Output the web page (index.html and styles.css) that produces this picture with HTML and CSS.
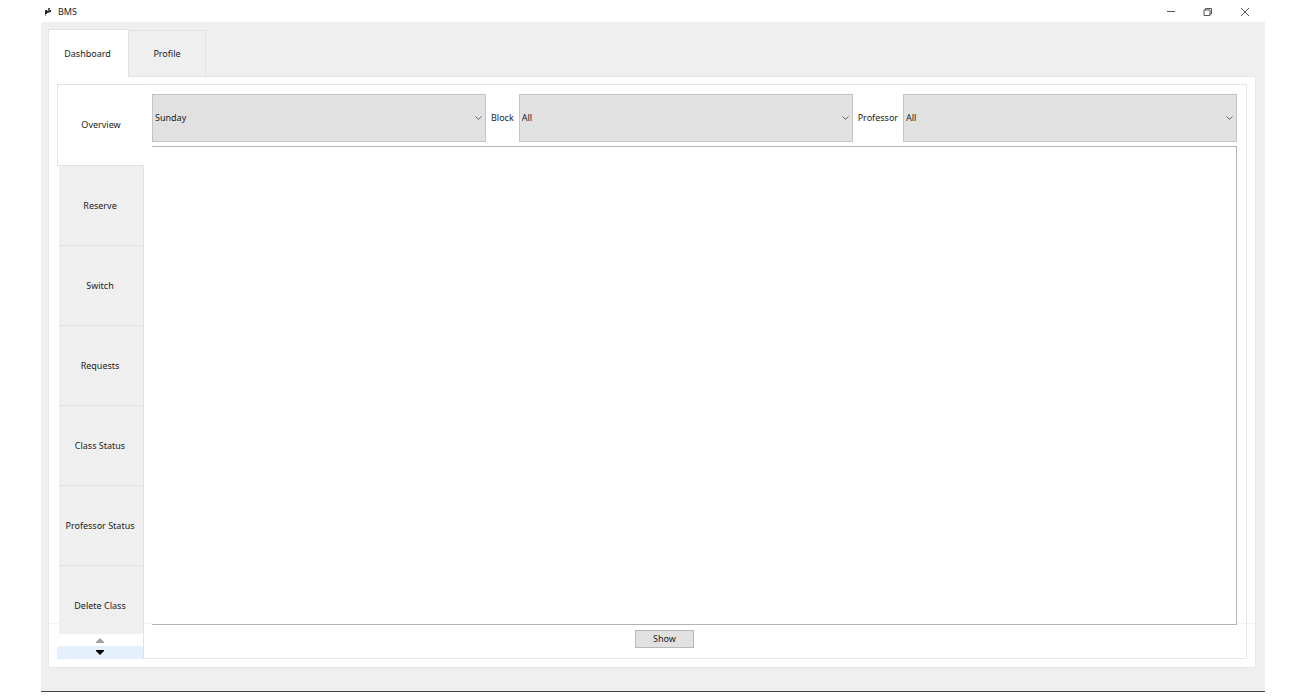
FILE: index.html
```html
<!DOCTYPE html>
<html lang="en">
<head>
    <meta charset="UTF-8">
    <meta name="viewport" content="width=device-width, initial-scale=1.0">
    <title>BMS</title>
    <link rel="stylesheet" href="styles.css">
</head>
<body>
    <div class="window">
        <header class="titlebar">
            <svg class="app-icon" viewBox="0 0 8 10" aria-hidden="true">
                <path d="M1 3 H3 V5 H1 Z M4 1 H6 V3 H4 Z" fill="#555"/>
                <path d="M1 4 L7 3 V5 L3 6 V7 H1 Z" fill="#222"/>
                <path d="M1 7 H2 V9 H1 Z" fill="#999"/>
            </svg>
            <span class="title">BMS</span>
            <div class="window-controls">
                <button class="control" aria-label="Minimize">
                    <svg viewBox="0 0 10 10"><path d="M1 4.5 H9"/></svg>
                </button>
                <button class="control" aria-label="Restore">
                    <svg viewBox="0 0 10 10"><path d="M1 3 H7 V8.5 H1 Z M2.5 3 V1.5 H8.5 V7 H7"/></svg>
                </button>
                <button class="control" aria-label="Close">
                    <svg viewBox="0 0 10 10"><path d="M1 1 L9 9 M9 1 L1 9"/></svg>
                </button>
            </div>
        </header>

        <div class="client">
            <nav class="tabs">
                <button class="tab active">Dashboard</button>
                <button class="tab">Profile</button>
            </nav>

            <main class="pane">
                <nav class="side">
                    <div class="side-tabs">
                        <button class="side-tab active">Overview</button>
                        <button class="side-tab">Reserve</button>
                        <button class="side-tab">Switch</button>
                        <button class="side-tab">Requests</button>
                        <button class="side-tab">Class Status</button>
                        <button class="side-tab">Professor Status</button>
                        <button class="side-tab">Delete Class</button>
                    </div>
                    <button class="scroll" aria-label="Scroll up" disabled>
                        <svg viewBox="0 0 8 5"><path d="M0 5 V4 L4 0 L8 4 V5 Z"/></svg>
                    </button>
                    <button class="scroll hover" aria-label="Scroll down">
                        <svg viewBox="0 0 8 5"><path d="M0 0 H8 V1 L4 5 L0 1 Z"/></svg>
                    </button>
                </nav>

                <section class="content">
                    <div class="filters">
                        <div class="combo">
                            <select id="day" aria-label="Day">
                                <option>Sunday</option>
                            </select>
                            <svg class="arrow" viewBox="0 0 7 4"><path d="M0.5 0.5 L3.5 3.3 L6.5 0.5"/></svg>
                        </div>
                        <label for="block">Block</label>
                        <div class="combo">
                            <select id="block">
                                <option>All</option>
                            </select>
                            <svg class="arrow" viewBox="0 0 7 4"><path d="M0.5 0.5 L3.5 3.3 L6.5 0.5"/></svg>
                        </div>
                        <label for="professor">Professor</label>
                        <div class="combo">
                            <select id="professor">
                                <option>All</option>
                            </select>
                            <svg class="arrow" viewBox="0 0 7 4"><path d="M0.5 0.5 L3.5 3.3 L6.5 0.5"/></svg>
                        </div>
                    </div>
                    <div class="schedule"></div>
                    <button class="show">Show</button>
                </section>
            </main>
        </div>
    </div>
</body>
</html>
```
FILE: styles.css
```css
* {
    box-sizing: border-box;
}
body {
    margin: 0;
    background: #fff;
    color: #222;
    font-family: "Noto Sans", sans-serif;
    font-size: 9px;
    line-height: 12px;
}
button,
select {
    font: inherit;
    color: inherit;
    margin: 0;
    padding: 0;
    border: none;
    border-radius: 0;
    background: none;
}
svg {
    display: block;
}
.window {
    display: flex;
    flex-direction: column;
    height: 100vh;
    padding: 0 33px 4px 41px;
}

/* title bar */
.titlebar {
    display: flex;
    align-items: center;
    gap: 6px;
    flex: 0 0 22px;
    padding: 2px 2px 0 3px;
}
.app-icon {
    width: 8px;
    height: 10px;
}
.window-controls {
    display: flex;
    margin-left: auto;
}
.control {
    display: flex;
    align-items: center;
    justify-content: center;
    width: 37px;
    height: 20px;
}
.control svg {
    width: 10px;
    height: 10px;
    fill: none;
    stroke: #555;
    stroke-width: 1;
}

/* main tabs */
.client {
    flex: 1;
    display: flex;
    flex-direction: column;
    min-height: 0;
    padding: 7px 9px 23px 7px;
    background: #efefef;
    border-bottom: 1px solid #444;
}
.tabs {
    display: flex;
    align-items: flex-end;
    flex: 0 0 47px;
}
.tab {
    width: 77px;
    height: 46px;
    border: 1px solid #e2e2e2;
    border-left: none;
    border-bottom: none;
}
.tab.active {
    width: 81px;
    height: 48px;
    padding-right: 2px;
    margin-bottom: -1px;
    border-left: 1px solid #e6e6e6;
    background: #fff;
    z-index: 1;
}
.pane {
    flex: 1;
    display: flex;
    min-height: 0;
    padding: 7px 8px 8px;
    border: 1px solid #e6e6e6;
    background: linear-gradient(#f3f3f3, #f3f3f3) 0 calc(100% - 43px) / 100% 1px no-repeat #fff;
}

/* side tabs */
.side {
    display: flex;
    flex-direction: column;
    flex: 0 0 87px;
}
.side-tabs {
    flex: 1;
    min-height: 0;
    overflow: hidden;
}
.side-tab {
    display: block;
    width: 85px;
    height: 80px;
    margin-left: 2px;
    padding-right: 2px;
    border-right: 1px solid #e2e2e2;
    border-bottom: 1px solid #e2e2e2;
    background: #efefef;
}
.side-tab.active {
    width: 87px;
    height: 82px;
    margin-left: 0;
    padding-right: 0;
    border: 1px solid #e2e2e2;
    border-right: none;
    background: #fff;
}
.scroll {
    display: flex;
    align-items: center;
    justify-content: center;
    flex: 0 0 12px;
    border-right: 1px solid #e2e2e2;
    background: #fff;
}
.scroll svg {
    width: 8px;
    height: 5px;
    fill: #000;
}
.scroll:disabled svg {
    fill: #a0a0a0;
}
.scroll.hover {
    flex-basis: 13px;
    background: #e5f0fd;
}

/* overview page */
.content {
    flex: 1;
    display: flex;
    flex-direction: column;
    min-width: 0;
    padding: 9px 9px 10px 8px;
    border: 1px solid #e6e6e6;
    border-left: none;
}
.filters {
    display: flex;
    align-items: center;
    gap: 5px;
    margin-bottom: 4px;
}
.combo {
    position: relative;
    flex: 1;
}
.combo select {
    display: block;
    width: 100%;
    height: 48px;
    padding: 0 2px;
    border: 1px solid #c4c4c4;
    background: #e1e1e1;
    appearance: none;
}
.arrow {
    position: absolute;
    top: 22px;
    right: 4px;
    width: 7px;
    height: 4px;
    fill: none;
    stroke: #666;
    pointer-events: none;
}
.schedule {
    flex: 1;
    border: 1px solid #b4b4b4;
    border-left: none;
    background: #fff;
}
.show {
    align-self: center;
    width: 59px;
    height: 18px;
    margin-top: 5px;
    margin-right: 60px;
    border: 1px solid #b8b8b8;
    background: #e1e1e1;
}
```
